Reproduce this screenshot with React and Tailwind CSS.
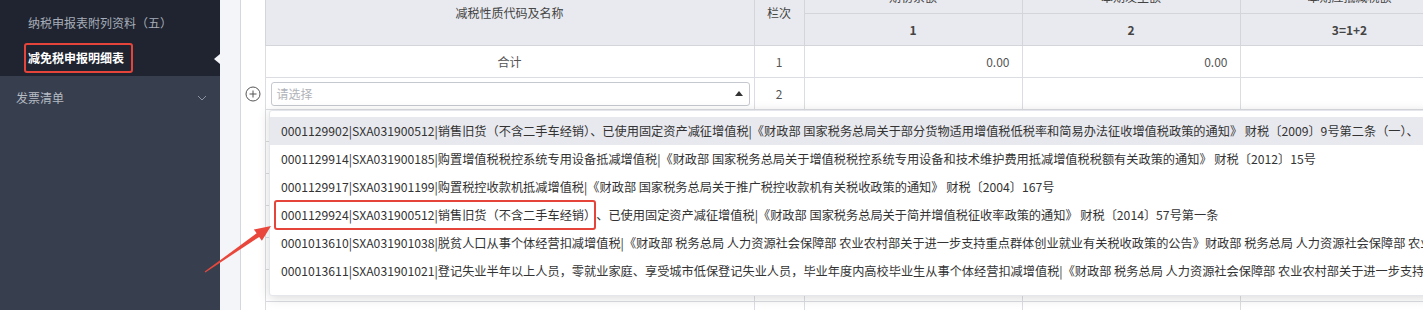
import React from "react";

const options = [
  "0001129902|SXA031900512|销售旧货（不含二手车经销）、已使用固定资产减征增值税|《财政部 国家税务总局关于部分货物适用增值税低税率和简易办法征收增值税政策的通知》 财税〔2009〕9号第二条（一）、",
  "0001129914|SXA031900185|购置增值税税控系统专用设备抵减增值税|《财政部 国家税务总局关于增值税税控系统专用设备和技术维护费用抵减增值税税额有关政策的通知》 财税〔2012〕15号",
  "0001129917|SXA031901199|购置税控收款机抵减增值税|《财政部 国家税务总局关于推广税控收款机有关税收政策的通知》 财税〔2004〕167号",
  null,
  "0001013610|SXA031901038|脱贫人口从事个体经营扣减增值税|《财政部 税务总局 人力资源社会保障部 农业农村部关于进一步支持重点群体创业就业有关税收政策的公告》财政部 税务总局 人力资源社会保障部 农业农村部公告2023年第15号",
  "0001013611|SXA031901021|登记失业半年以上人员，零就业家庭、享受城市低保登记失业人员，毕业年度内高校毕业生从事个体经营扣减增值税|《财政部 税务总局 人力资源社会保障部 农业农村部关于进一步支持重点群体创业就业有关税收政策的公告》",
];

const th = "border border-[#d4d5db] bg-[#e9eaef] text-[#444] text-[12px] font-normal text-center";
const td = "border border-[#dcdde2] bg-white text-[#555] text-[12px] h-[32px]";

export default function App() {
  return (
    <div className="relative flex h-[310px] w-[1423px] overflow-hidden bg-[#f4f5f8] font-['Noto_Sans_CJK_SC','Microsoft_YaHei',sans-serif]">
      {/* Sidebar */}
      <aside className="flex w-[220px] shrink-0 flex-col bg-[#373f4e]">
        <div className="flex h-[76px] flex-col bg-[#1f2430]">
          <div className="mt-[5px] flex h-[36px] items-center pl-[28px] text-[12px] text-[#a7adb8]">
            纳税申报表附列资料（五）
          </div>
          <div className="relative flex h-[34px] items-center pl-[28px] text-[12px] font-bold text-white">
            减免税申报明细表
            <span className="absolute left-[24px] top-[2px] h-[30px] w-[109px] rounded-[3px] border-2 border-[#e5443a]" />
            <svg className="absolute right-0 top-[13px]" width="6" height="10" viewBox="0 0 6 10">
              <polygon points="6,0 0,5 6,10" fill="#f4f5f8" />
            </svg>
          </div>
        </div>
        <div className="flex h-[44px] items-center justify-between pl-[16px] pr-[13px] text-[12px] text-[#b6bbc4]">
          发票清单
          <svg width="10" height="6" viewBox="0 0 10 6">
            <polyline points="1,1 5,5 9,1" fill="none" stroke="#8b93a1" strokeWidth="1" />
          </svg>
        </div>
      </aside>

      {/* Main */}
      <main className="relative flex flex-1 overflow-hidden">
        <div className="w-[21px] shrink-0 border-r border-[#d5d7de] bg-[#f4f5f8]" />
        <div className="relative flex-1 overflow-hidden bg-white">
          <table className="-mt-[21px] w-[1218px] table-fixed border-collapse">
            <colgroup>
              <col className="w-[24px]" />
              <col className="w-[489px]" />
              <col className="w-[50px]" />
              <col className="w-[218px]" />
              <col className="w-[218px]" />
              <col className="w-[219px]" />
            </colgroup>
            <thead>
              <tr className="h-[34px]">
                <th rowSpan={2} className="border-0 bg-white" />
                <th rowSpan={2} className={th}>减税性质代码及名称</th>
                <th rowSpan={2} className={th}>栏次</th>
                <th className={th}>期初余额</th>
                <th className={th}>本期发生额</th>
                <th className={th}>本期应抵减税额</th>
              </tr>
              <tr className="h-[32px]">
                <th className={th + " font-semibold"}>1</th>
                <th className={th + " font-semibold"}>2</th>
                <th className={th + " font-semibold"}>3=1+2</th>
              </tr>
            </thead>
            <tbody>
              <tr>
                <td className="border-0 bg-white" />
                <td className={td + " text-center"}>合计</td>
                <td className={td + " text-center"}>1</td>
                <td className={td + " pr-[12px] text-right"}>0.00</td>
                <td className={td + " pr-[12px] text-right"}>0.00</td>
                <td className={td} />
              </tr>
              <tr>
                <td className="border-0 bg-white">
                  <div className="flex justify-center">
                    <svg width="16" height="16" viewBox="0 0 16 16">
                      <circle cx="8" cy="8" r="7" fill="none" stroke="#555" strokeWidth="1" />
                      <line x1="4.5" y1="8" x2="11.5" y2="8" stroke="#555" strokeWidth="1" />
                      <line x1="8" y1="4.5" x2="8" y2="11.5" stroke="#555" strokeWidth="1" />
                    </svg>
                  </div>
                </td>
                <td className={td + " pl-[5px] pr-[4px]"}>
                  <div className="flex h-[24px] items-center justify-between rounded-[3px] border border-[#c5c8cf] pl-[5px] pr-[6px]">
                    <span className="text-[12px] text-[#b0b3b9]">请选择</span>
                    <svg width="8" height="5" viewBox="0 0 8 5">
                      <polygon points="0,5 4,0 8,5" fill="#333" />
                    </svg>
                  </div>
                </td>
                <td className={td + " text-center"}>2</td>
                <td className={td} />
                <td className={td} />
                <td className={td} />
              </tr>
              {[0, 1, 2, 3, 4, 5, 6].map((i) => (
                <tr key={i}>
                  <td className="border-0 bg-white" />
                  <td className={td} />
                  <td className={td} />
                  <td className={td} />
                  <td className={td} />
                  <td className={td} />
                </tr>
              ))}
            </tbody>
          </table>

          {/* Dropdown */}
          <div className="absolute left-[28px] top-[110px] h-[186px] w-[1400px] rounded-[3px] border border-[#e4e6eb] bg-white pt-[6px] shadow-[0_2px_12px_rgba(0,0,0,0.15)]">
            {options.map((opt, i) => (
              <div
                key={i}
                className={
                  "flex h-[28px] items-center whitespace-nowrap pl-[11px] text-[12.2px] text-[#333] " +
                  (i === 0 ? "bg-[#e8e9ee]" : "")
                }
              >
                {opt === null ? (
                  <>
                    <span className="relative">
                      0001129924|SXA031900512|销售旧货（不含二手车经销）
                      <span className="absolute -bottom-[6px] -left-[7px] -top-[6px] right-0 rounded-[3px] border-2 border-[#e5443a]" />
                    </span>
                    、已使用固定资产减征增值税|《财政部 国家税务总局关于简并增值税征收率政策的通知》 财税〔2014〕57号第一条
                  </>
                ) : (
                  opt
                )}
              </div>
            ))}
          </div>
        </div>
      </main>

      {/* Annotation arrow */}
      <svg className="pointer-events-none absolute left-0 top-0" width="300" height="310" viewBox="0 0 300 310">
        <polygon
          points="204.7,271.6 256.6,233.3 253.9,229.4 271,226 261.9,240.8 259.2,236.9 205.3,272.4"
          fill="#e9473b"
        />
      </svg>
    </div>
  );
}
